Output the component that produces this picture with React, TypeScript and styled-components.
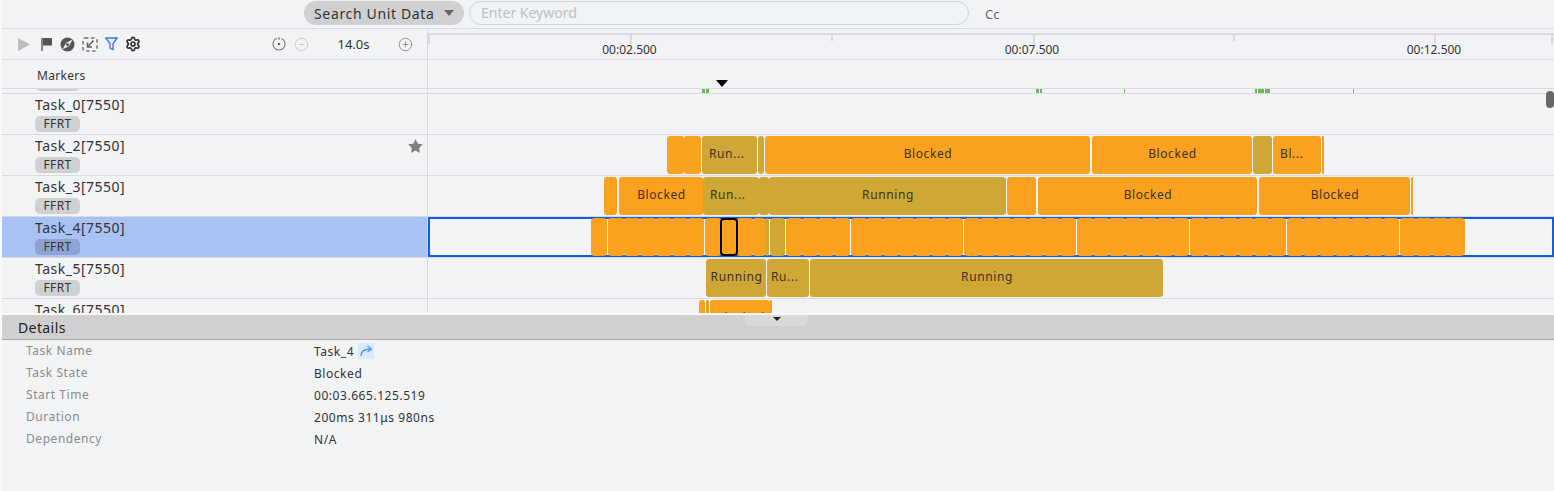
import React from 'react';
import styled, { createGlobalStyle } from 'styled-components';
import { CircleMinus, CirclePlus, Settings } from 'lucide-react';

const BG = '#f1f3f5';
const LINE = '#d8dadd';
const BLOCKED = '#fba120';
const RUNNING = '#cfa736';
const LANE_X = 428;

const GlobalStyle = createGlobalStyle`
  html, body {
    margin: 0;
    background: #fff;
    font-family: "Noto Sans", "Open Sans", sans-serif;
    overflow: hidden;
  }
`;

const Page = styled.div`
  height: 491px;
  padding-left: 2px;
  display: flex;
  flex-direction: column;
  background: #fafafa;
  overflow: hidden;
`;

const Surface = styled.div`
  background: ${BG};
  flex: none;
`;

const TopBar = styled.div`
  height: 27px;
  border-bottom: 1px solid ${LINE};
  padding: 1px 0 0 302px;
  display: flex;
  align-items: flex-start;
`;

const SearchSelect = styled.div`
  width: 160px;
  height: 24px;
  border-radius: 12px;
  background: #cfd0d2;
  display: flex;
  align-items: center;
  padding-left: 10px;
  box-sizing: border-box;
  font-size: 14px;
  letter-spacing: 0.65px;
  color: #333;
  gap: 9px;
`;

const Caret = styled.span`
  width: 0;
  height: 0;
  border-left: 5px solid transparent;
  border-right: 5px solid transparent;
  border-top: 6px solid #666;
`;

const KeywordField = styled.div`
  width: 500px;
  height: 24px;
  margin-left: 5px;
  border: 1px solid #d0d3d6;
  border-radius: 13px;
  padding-left: 11px;
  box-sizing: border-box;
  font-size: 14px;
  line-height: 22px;
  color: #bdbfc2;
`;

const CaseToggle = styled.span`
  margin: 4px 0 0 16px;
  font-size: 13px;
  color: #666;
`;

const HeadRow = styled.div`
  display: grid;
  grid-template-columns: 426px 1fr;
  height: 30px;
  border-bottom: 1px solid ${LINE};
`;

const LeftCell = styled.div`
  border-right: 1px solid ${LINE};
`;

const Toolbar = styled(LeftCell)`
  display: flex;
  align-items: center;
  padding: 0 14px 0 16px;
`;

const IconGroup = styled.div`
  display: flex;
  align-items: center;
  gap: 7px;
`;

const ZoomGroup = styled.div`
  margin-left: auto;
  display: flex;
  align-items: center;
  color: #777;
`;

const ZoomValue = styled.span`
  width: 89px;
  text-align: center;
  font-size: 13px;
  color: #333;
`;

const Ruler = styled.div`
  position: relative;
  &::before {
    content: '';
    position: absolute;
    left: 0;
    right: 0;
    top: 4px;
    height: 2px;
    background: ${LINE};
  }
`;

const Tick = styled.span<{ $major?: boolean }>`
  position: absolute;
  top: 4px;
  width: 2px;
  height: ${(p) => (p.$major ? 11 : 8)}px;
  background: ${LINE};
`;

const TickLabel = styled.span`
  position: absolute;
  top: 12px;
  transform: translateX(-50%);
  font-size: 12px;
  line-height: 18px;
  color: #333;
  white-space: nowrap;
`;

const MarkerRow = styled.div`
  display: grid;
  grid-template-columns: 426px 1fr;
  height: 28px;
  border-bottom: 1px solid ${LINE};
`;

const MarkerLabel = styled(LeftCell)`
  padding-left: 35px;
  font-size: 12px;
  letter-spacing: 0.3px;
  line-height: 31px;
  color: #333;
`;

const MarkerLane = styled.div`
  position: relative;
`;

const FlagHead = styled.span`
  position: absolute;
  left: 288px;
  top: 20px;
  width: 0;
  height: 0;
  border-left: 6px solid transparent;
  border-right: 6px solid transparent;
  border-top: 7px solid #000;
`;

const RowsPane = styled.div`
  position: relative;
`;

const Stub = styled.div`
  display: grid;
  grid-template-columns: 426px 1fr;
  height: 4px;
  border-bottom: 1px solid ${LINE};
  overflow: hidden;
`;

const StubLeft = styled(LeftCell)`
  padding-left: 33px;
  overflow: hidden;
`;

const Chip = styled.div<{ $selected?: boolean }>`
  width: 45px;
  height: 16px;
  border-radius: 5px;
  background: ${(p) => (p.$selected ? '#8ea3cf' : '#cfd0d2')};
  font-size: 12px;
  line-height: 16px;
  letter-spacing: 0.3px;
  text-align: center;
  color: #333;
`;

const StubChip = styled(Chip)`
  margin-top: -14px;
`;

const StubLane = styled.div`
  position: relative;
`;

const MarkTick = styled.span`
  position: absolute;
  top: 0;
  height: 4px;
  background: #66bb5a;
`;

const ScrollArea = styled.div`
  height: 219px;
  overflow: hidden;
`;

const Thumb = styled.div`
  position: absolute;
  right: 0;
  top: 2px;
  width: 8px;
  height: 17px;
  border-radius: 4px;
  background: #666;
`;

const TaskRow = styled.div`
  display: grid;
  grid-template-columns: 426px 1fr;
  height: 40px;
  border-bottom: 1px solid ${LINE};
`;

const TaskInfo = styled(LeftCell)<{ $selected?: boolean }>`
  position: relative;
  padding-left: 33px;
  background: ${(p) => (p.$selected ? '#a9c2f5' : 'transparent')};
`;

const TaskName = styled.div`
  font-size: 14px;
  letter-spacing: 0.5px;
  line-height: 22px;
  color: #333;
`;

const StarMark = styled.svg`
  position: absolute;
  right: 4px;
  top: 4px;
`;

const Lane = styled.div`
  position: relative;
`;

const LaneFrame = styled.div`
  position: absolute;
  left: 0;
  right: 0;
  top: 0;
  height: 40px;
  border: 2px solid #0f5fe6;
  box-sizing: border-box;
`;

const Slice = styled.div<{ $state: 'b' | 'r'; $inset?: number }>`
  position: absolute;
  top: 1px;
  height: 38px;
  box-sizing: border-box;
  padding-left: ${(p) => p.$inset ?? 1}px;
  border-radius: 3px;
  background: ${(p) => (p.$state === 'b' ? BLOCKED : RUNNING)};
  font-size: 12px;
  line-height: 36px;
  letter-spacing: 0.6px;
  text-align: ${(p) => (p.$inset ? 'left' : 'center')};
  color: #3c3222;
  white-space: nowrap;
  overflow: hidden;
`;

const DenseSlice = styled.div<{ $state: 'b' | 'r' }>`
  position: absolute;
  top: 1px;
  height: 38px;
  display: flex;
  overflow: hidden;
  border-radius: 3px;
  > span {
    flex: none;
    width: 16px;
    border-radius: 3px;
    background: ${(p) => (p.$state === 'b' ? BLOCKED : RUNNING)};
  }
`;

const PickedSlice = styled.div`
  position: absolute;
  top: 1px;
  height: 38px;
  border: 2px solid #000;
  border-radius: 4px;
  box-sizing: border-box;
  background: ${BLOCKED};
`;

const Details = styled.div`
  margin-top: 2px;
  flex: 1;
  background: ${BG};
`;

const DetailsHeader = styled.div`
  position: relative;
  height: 24px;
  padding-left: 16px;
  background: #d0d0d0;
  border-bottom: 1px solid #aaa;
  font-size: 14px;
  letter-spacing: 0.4px;
  line-height: 25px;
  color: #222;
`;

const CollapseHandle = styled.div`
  position: absolute;
  left: 743px;
  top: 0;
  width: 63px;
  height: 11px;
  border-radius: 0 0 6px 6px;
  background: #d9d9d9;
  display: flex;
  justify-content: center;
  padding-top: 2px;
  box-sizing: border-box;
  &::after {
    content: '';
    width: 0;
    height: 0;
    border-left: 4px solid transparent;
    border-right: 4px solid transparent;
    border-top: 4px solid #222;
  }
`;

const DetailRow = styled.div`
  display: grid;
  grid-template-columns: 288px 1fr;
  height: 22px;
  padding-left: 24px;
  align-items: center;
  font-size: 12px;
  letter-spacing: 0.55px;
`;

const DetailKey = styled.span`
  color: #8c8c8c;
  transform: translateY(-1px);
`;

const DetailValue = styled.span`
  color: #333;
  display: flex;
  align-items: center;
  gap: 4px;
`;

const JumpLink = styled.span`
  width: 16px;
  height: 16px;
  background: #dce8fb;
  display: inline-flex;
  align-items: center;
  justify-content: center;
`;

type Seg = { from: number; to: number; state: 'b' | 'r'; label?: string; inset?: number };

const seg = (from: number, to: number, state: 'b' | 'r', label?: string, inset?: number): Seg => ({ from, to, state, label, inset });

const TASKS: { name: string; starred?: boolean; selected?: boolean; segs: Seg[] }[] = [
  { name: 'Task_0[7550]', segs: [] },
  {
    name: 'Task_2[7550]',
    starred: true,
    segs: [
      seg(667, 684, 'b'),
      seg(684, 701, 'b'),
      seg(702, 757, 'r', 'Run...', 7),
      seg(758, 764, 'r'),
      seg(765, 1090, 'b', 'Blocked'),
      seg(1092, 1252, 'b', 'Blocked'),
      seg(1253, 1272, 'r'),
      seg(1273, 1321, 'b', 'Bl...', 7),
      seg(1322, 1324, 'b'),
    ],
  },
  {
    name: 'Task_3[7550]',
    segs: [
      seg(604, 617, 'b'),
      seg(619, 703, 'b', 'Blocked'),
      seg(703, 759, 'r', 'Run...', 7),
      seg(759, 769, 'r'),
      seg(769, 1006, 'r', 'Running'),
      seg(1007, 1036, 'b'),
      seg(1038, 1257, 'b', 'Blocked'),
      seg(1259, 1410, 'b', 'Blocked'),
      seg(1411, 1413, 'b'),
    ],
  },
  {
    name: 'Task_4[7550]',
    selected: true,
    segs: [
      seg(591, 607, 'b'),
      seg(608, 704, 'b'),
      seg(705, 765, 'b'),
      seg(765, 769, 'r'),
      seg(770, 785, 'r'),
      seg(786, 850, 'b'),
      seg(851, 963, 'b'),
      seg(964, 1076, 'b'),
      seg(1077, 1189, 'b'),
      seg(1190, 1286, 'b'),
      seg(1287, 1399, 'b'),
      seg(1400, 1465, 'b'),
    ],
  },
  {
    name: 'Task_5[7550]',
    segs: [seg(706, 766, 'r', 'Running'), seg(767, 809, 'r', 'Ru...', 4), seg(810, 1163, 'r', 'Running')],
  },
  {
    name: 'Task_6[7550]',
    segs: [seg(699, 705, 'b'), seg(706, 709, 'r'), seg(710, 770, 'b', 'Blocked'), seg(770, 772, 'b')],
  },
];

const TICKS: [number, boolean][] = [
  [428, true],
  [630, true],
  [831, false],
  [1033, true],
  [1233, false],
  [1434, true],
  [1551, true],
];

const LABELS: [number, string][] = [
  [629.5, '00:02.500'],
  [1032, '00:07.500'],
  [1434, '00:12.500'],
];

const MARKS: [number, number][] = [
  [702, 3],
  [706, 3],
  [1036, 3],
  [1040, 2],
  [1124, 1],
  [1255, 2],
  [1258, 6],
  [1265, 5],
  [1353, 1],
];

const DETAILS: [string, string][] = [
  ['Task Name', 'Task_4'],
  ['Task State', 'Blocked'],
  ['Start Time', '00:03.665.125.519'],
  ['Duration', '200ms 311μs 980ns'],
  ['Dependency', 'N/A'],
];

const laneX = (x: number) => x - LANE_X;

const tiles = (width: number) => Array.from({ length: Math.ceil(width / 16) });

const ToolIcons = () => (
  <IconGroup>
    <svg width="12" height="15" viewBox="0 0 12 15">
      <path d="M0 1 L12 7.5 L0 14 Z" fill="#bcbcbc" />
    </svg>
    <svg width="11" height="15" viewBox="0 0 11 15" style={{ marginLeft: 4 }}>
      <path d="M1 1v13" stroke="#888" strokeWidth="2" />
      <path d="M2 1h9v7.500H2z" fill="#555" />
    </svg>
    <svg width="15" height="15" viewBox="0 0 15 15" style={{ marginLeft: 1 }}>
      <circle cx="7.500" cy="7.500" r="7" fill="#555" />
      <path d="M12.500 2.500 L9 9 L2.500 12.500 L6 6 Z" fill="#f1f3f5" />
      <circle cx="7.500" cy="7.500" r="1.500" fill="#555" />
    </svg>
    <svg width="16" height="15" viewBox="0 0 16 15" fill="none">
      <rect x="1" y="1" width="14" height="13" rx="2" stroke="#777" strokeWidth="1.500" strokeDasharray="3.500 2.500" />
      <path d="M11.500 3.500 L6 9.500 M5.500 5.500 V10 H10" stroke="#666" strokeWidth="1.600" />
    </svg>
    <svg width="13" height="14" viewBox="0 0 13 14" fill="none">
      <path d="M.8 1h11.400L8 6.500v6.300L5 11V6.500z" stroke="#2f78f0" strokeWidth="1.300" strokeLinejoin="round" />
    </svg>
    <Settings size={16} strokeWidth={2.6} color="#333" />
  </IconGroup>
);

const ZoomControls = () => (
  <ZoomGroup>
    <svg width="14" height="14" viewBox="0 0 14 14" fill="none">
      <path d="M5 1.300 A6 6 0 1 0 9.500 1.500" stroke="#777" strokeWidth="1.100" />
      <path d="M7 0v3" stroke="#777" strokeWidth="1.100" />
      <circle cx="7" cy="7" r="1.300" fill="#666" />
    </svg>
    <CircleMinus size={15} strokeWidth={1.200} color="#bdbdbd" style={{ marginLeft: 8 }} />
    <ZoomValue>14.0s</ZoomValue>
    <CirclePlus size={15} strokeWidth={1.200} color="#777" />
  </ZoomGroup>
);

export default function App() {
  return (
    <Page>
      <GlobalStyle />
      <Surface>
        <TopBar>
          <SearchSelect>
            Search Unit Data
            <Caret />
          </SearchSelect>
          <KeywordField>Enter Keyword</KeywordField>
          <CaseToggle>Cc</CaseToggle>
        </TopBar>
        <HeadRow>
          <Toolbar>
            <ToolIcons />
            <ZoomControls />
          </Toolbar>
          <Ruler>
            {TICKS.map(([x, major]) => (
              <Tick key={x} $major={major} style={{ left: laneX(x) }} />
            ))}
            {LABELS.map(([x, text]) => (
              <TickLabel key={text} style={{ left: laneX(x) }}>
                {text}
              </TickLabel>
            ))}
          </Ruler>
        </HeadRow>
        <MarkerRow>
          <MarkerLabel>Markers</MarkerLabel>
          <MarkerLane>
            <FlagHead />
          </MarkerLane>
        </MarkerRow>
        <RowsPane>
          <Stub>
            <StubLeft>
              <StubChip />
            </StubLeft>
            <StubLane>
              {MARKS.map(([x, w]) => (
                <MarkTick key={x} style={{ left: laneX(x), width: w }} />
              ))}
            </StubLane>
          </Stub>
          <ScrollArea>
            {TASKS.map((task) => (
              <TaskRow key={task.name}>
                <TaskInfo $selected={task.selected}>
                  <TaskName>{task.name}</TaskName>
                  <Chip $selected={task.selected}>FFRT</Chip>
                  {task.starred && (
                    <StarMark width="15" height="14" viewBox="0 0 24 23">
                      <path d="M12 0l3.700 7.600 8.300 1.200-6 5.900 1.400 8.300L12 19l-7.400 4L6 14.700 0 8.800l8.300-1.200z" fill="#808080" />
                    </StarMark>
                  )}
                </TaskInfo>
                <Lane>
                  {task.selected && <LaneFrame />}
                  {task.segs.map((s) =>
                    task.selected ? (
                      <DenseSlice key={s.from} $state={s.state} style={{ left: laneX(s.from), width: s.to - s.from }}>
                        {tiles(s.to - s.from).map((_, i) => (
                          <span key={i} />
                        ))}
                      </DenseSlice>
                    ) : (
                      <Slice key={s.from} $state={s.state} $inset={s.inset} style={{ left: laneX(s.from), width: s.to - s.from }}>
                        {s.label}
                      </Slice>
                    ),
                  )}
                  {task.selected && <PickedSlice style={{ left: laneX(720), width: 18 }} />}
                </Lane>
              </TaskRow>
            ))}
          </ScrollArea>
          <Thumb />
        </RowsPane>
      </Surface>
      <Details>
        <DetailsHeader>
          Details
          <CollapseHandle />
        </DetailsHeader>
        {DETAILS.map(([key, value], i) => (
          <DetailRow key={key}>
            <DetailKey>{key}</DetailKey>
            <DetailValue>
              {value}
              {i === 0 && (
                <JumpLink>
                  <svg width="14" height="12" viewBox="0 0 14 12" fill="none">
                    <path d="M2 11 C2 6 5 4 12 4 M8.500 1 L12.500 4 L8.500 7" stroke="#5b96f0" strokeWidth="1.300" />
                  </svg>
                </JumpLink>
              )}
            </DetailValue>
          </DetailRow>
        ))}
      </Details>
    </Page>
  );
}
